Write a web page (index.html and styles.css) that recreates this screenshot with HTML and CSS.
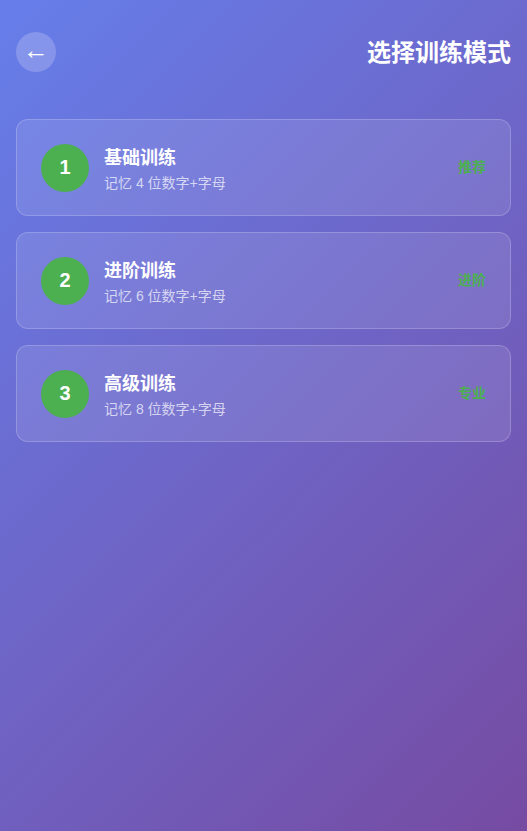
FILE: index.html
```html
<!DOCTYPE html>
<html lang="zh">
<head>
    <meta charset="UTF-8">
    <meta name="viewport" content="width=device-width, initial-scale=1.0">
    <title>选择训练模式</title>
    <link rel="stylesheet" href="styles.css">
</head>
<body>
    <div class="page">
        <header class="top-bar">
            <button class="back-btn" type="button"><span>←</span></button>
            <h1>选择训练模式</h1>
        </header>
        <section class="mode-list">
            <div class="mode-card">
                <div class="mode-num">1</div>
                <div class="mode-info">
                    <div class="mode-title">基础训练</div>
                    <div class="mode-desc">记忆 4 位数字+字母</div>
                </div>
                <div class="mode-tag">推荐</div>
            </div>
            <div class="mode-card">
                <div class="mode-num">2</div>
                <div class="mode-info">
                    <div class="mode-title">进阶训练</div>
                    <div class="mode-desc">记忆 6 位数字+字母</div>
                </div>
                <div class="mode-tag">进阶</div>
            </div>
            <div class="mode-card">
                <div class="mode-num">3</div>
                <div class="mode-info">
                    <div class="mode-title">高级训练</div>
                    <div class="mode-desc">记忆 8 位数字+字母</div>
                </div>
                <div class="mode-tag">专业</div>
            </div>
        </section>
    </div>
</body>
</html>
```

FILE: styles.css
```css
*{
    margin: 0;
    padding: 0;
    box-sizing: border-box;
    font-family: "Liberation Sans", "Noto Sans CJK SC", sans-serif;
}
html, body{
    height: 100%;
}
body{
    background: linear-gradient(135deg, #667eea 0%, #764ba2 100%);
    color: white;
}
.page{
    padding: 32px 16px;
}
.top-bar{
    display: flex;
    align-items: center;
    justify-content: space-between;
    height: 40px;
    margin-bottom: 47px;
}
.back-btn{
    width: 40px;
    height: 40px;
    border-radius: 50%;
    border: none;
    background: rgba(255,255,255,0.2);
    color: white;
    display: flex;
    align-items: center;
    justify-content: center;
}
.back-btn span{
    font-size: 26px;
    line-height: 1;
    margin-top: -5px;
}
h1{
    font-size: 24px;
    font-weight: bold;
    margin-top: -3px;
}
.mode-list{
    display: flex;
    flex-direction: column;
    gap: 16px;
}
.mode-card{
    display: flex;
    align-items: center;
    gap: 15px;
    padding: 23px 24px;
    border-radius: 12px;
    background: rgba(255,255,255,0.1);
    border: 1px solid rgba(255,255,255,0.2);
}
.mode-num{
    width: 48px;
    height: 48px;
    border-radius: 50%;
    background: #4caf50;
    display: flex;
    align-items: center;
    justify-content: center;
    font-size: 20px;
    font-weight: bold;
    flex-shrink: 0;
}
.mode-info{
    flex: 1;
}
.mode-title{
    font-size: 18px;
    font-weight: bold;
    margin-bottom: 3px;
}
.mode-desc{
    font-size: 14px;
    color: rgba(255,255,255,0.7);
}
.mode-tag{
    font-size: 14px;
    font-weight: bold;
    color: #4caf50;
    margin-bottom: 3px;
}
```
